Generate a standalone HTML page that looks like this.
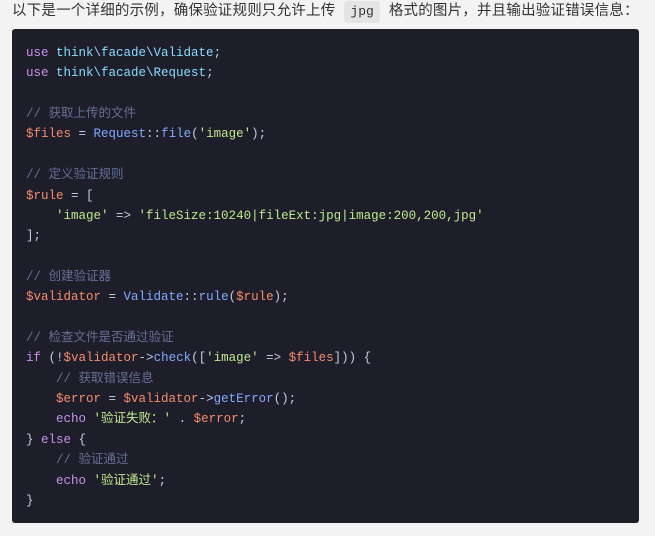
<!DOCTYPE html>
<html><head><meta charset="utf-8"><style>
body{margin:0;background:#f3f3f3;width:655px;height:536px;overflow:hidden;font-family:"Liberation Sans","Noto Sans CJK SC",sans-serif;}
.p{position:absolute;left:12px;top:0px;font-size:14.5px;color:#333;line-height:22px;white-space:nowrap;letter-spacing:0.2px}
.c{display:inline-block;background:#e4e4e4;border-radius:3px;padding:0 6px;margin:0 9px;font-family:"Liberation Mono",monospace;font-size:13px;color:#333;line-height:22px;letter-spacing:0}
pre{position:absolute;left:12px;top:29px;width:627px;height:494px;margin:0;background:#1e1e2b;border-radius:3px;box-sizing:border-box;padding:14px 14px;font-family:"Liberation Mono","Noto Sans CJK SC",monospace;font-size:12.5px;line-height:20.36px;color:#c4cbe0}
.k{color:#c792ea}.n{color:#89ddff}.v{color:#f78c6c}.s{color:#c3e88d}.m{color:#676e95}.f{color:#82aaff}
</style></head><body>
<div class="p">以下是一个详细的示例，确保验证规则只允许上传<span class="c">jpg</span>格式的图片，并且输出验证错误信息：</div>
<pre><span class="k">use</span> <span class="n">think\facade\Validate</span>;
<span class="k">use</span> <span class="n">think\facade\Request</span>;

<span class="m">// 获取上传的文件</span>
<span class="v">$files</span> = <span class="f">Request</span>::<span class="f">file</span>(<span class="s">'image'</span>);

<span class="m">// 定义验证规则</span>
<span class="v">$rule</span> = [
    <span class="s">'image'</span> =&gt; <span class="s">'fileSize:10240|fileExt:jpg|image:200,200,jpg'</span>
];

<span class="m">// 创建验证器</span>
<span class="v">$validator</span> = <span class="f">Validate</span>::<span class="f">rule</span>(<span class="v">$rule</span>);

<span class="m">// 检查文件是否通过验证</span>
<span class="k">if</span> (!<span class="v">$validator</span>-&gt;<span class="f">check</span>([<span class="s">'image'</span> =&gt; <span class="v">$files</span>])) {
    <span class="m">// 获取错误信息</span>
    <span class="v">$error</span> = <span class="v">$validator</span>-&gt;<span class="f">getError</span>();
    <span class="k">echo</span> <span class="s">'验证失败：'</span> . <span class="v">$error</span>;
} <span class="k">else</span> {
    <span class="m">// 验证通过</span>
    <span class="k">echo</span> <span class="s">'验证通过'</span>;
}</pre>
</body></html>
